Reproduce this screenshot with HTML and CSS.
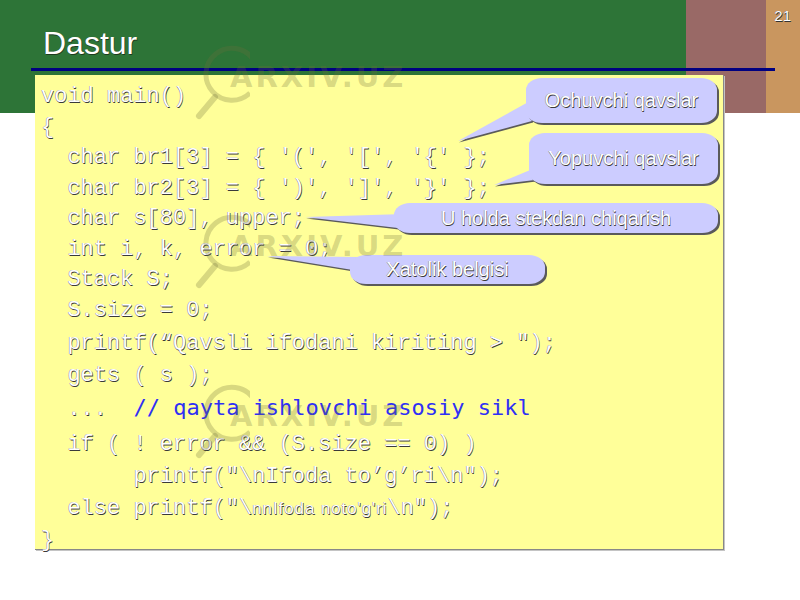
FILE: index.html
```html
<!DOCTYPE html>
<html lang="uz">
<head>
  <meta charset="UTF-8">
  <title>Dastur</title>
  <link rel="stylesheet" href="styles.css">
</head>
<body>
<div class="slide">

  <div class="top">
    <h1 class="title">Dastur</h1>
    <div class="num">21</div>
  </div>
  <div class="rule"></div>

  <!-- kod bloki -->
  <div class="code">
    <div class="ln">void main()</div>
    <div class="ln">{</div>
    <div class="ln">  char br1[3] = { '(', '[', '{' };</div>
    <div class="ln">  char br2[3] = { ')', ']', '}' };</div>
    <div class="ln">  char s[80], upper;</div>
    <div class="ln">  int i, k, error = 0;</div>
    <div class="ln">  Stack S;</div>
    <div class="ln">  S.size = 0;</div>
    <div class="ln g2 first">  printf(“Qavsli ifodani kiriting &gt; ");</div>
    <div class="ln g2">  gets ( s );</div>
    <div class="ln g2">  ...  <span class="cm">// qayta ishlovchi asosiy sikl</span></div>
    <div class="ln g2 cond">  if ( ! error &amp;&amp; (S.size == 0) )</div>
    <div class="ln g2">       printf("\nIfoda to’g’ri\n");</div>
    <div class="ln g2">  else printf("\<span class="sm">nnIfoda noto'g'ri</span>\n");</div>
    <div class="ln g2">}</div>
  </div>

  <!-- izoh pufakchalari -->
  <svg class="tails" width="800" height="600" viewBox="0 0 800 600">
    <g fill="#5a5a5a" transform="translate(1 1.5)">
      <polygon points="532,100 458,141 532,121"/>
      <polygon points="535,168 494,185 535,180"/>
      <polygon points="405,214 305,217 440,233"/>
      <polygon points="360,257 267,256 365,272"/>
    </g>
    <g fill="#ccccff">
      <polygon points="532,100 458,141 532,121"/>
      <polygon points="535,168 494,185 535,180"/>
      <polygon points="405,214 305,217 440,233"/>
      <polygon points="360,257 267,256 365,272"/>
    </g>
  </svg>
  <div class="callout c1">Ochuvchi qavslar</div>
  <div class="callout c2">Yopuvchi qavslar</div>
  <div class="callout c3">U holda stekdan chiqarish</div>
  <div class="callout c4">Xatolik belgisi</div>

  <!-- suv belgisi -->
  <div class="wm w1">
    <svg width="60" height="80" viewBox="0 0 60 80"><path d="M63 14 A26 26 0 1 0 60 48" fill="none" stroke="currentColor" stroke-width="5"/><line x1="25" y1="52" x2="9" y2="71" stroke="currentColor" stroke-width="6" stroke-linecap="round"/></svg>
    <span>ARXIV.UZ</span>
  </div>
  <div class="wm w2">
    <svg width="60" height="80" viewBox="0 0 60 80"><path d="M63 14 A26 26 0 1 0 60 48" fill="none" stroke="currentColor" stroke-width="5"/><line x1="25" y1="52" x2="9" y2="71" stroke="currentColor" stroke-width="6" stroke-linecap="round"/></svg>
    <span>ARXIV.UZ</span>
  </div>
  <div class="wm w3">
    <svg width="60" height="80" viewBox="0 0 60 80"><path d="M63 14 A26 26 0 1 0 60 48" fill="none" stroke="currentColor" stroke-width="5"/><line x1="25" y1="52" x2="9" y2="71" stroke="currentColor" stroke-width="6" stroke-linecap="round"/></svg>
    <span>ARXIV.UZ</span>
  </div>

</div>
</body>
</html>
```

FILE: styles.css
```css
body {
  margin: 0;
  background: #fff;
  font-family: "Liberation Sans", Arial, sans-serif;
}

.slide {
  position: relative;
  width: 800px;
  height: 600px;
  overflow: hidden;
  background: linear-gradient(to right, #2d7437 0 686px, #996966 686px 766px, #c9965f 766px) no-repeat 0 0 / 100% 113px;
}

.top {
  display: flex;
  justify-content: space-between;
  height: 68px;
}

.title {
  margin: 0;
  padding: 27px 0 0 43px;
  font-size: 32px;
  line-height: 32px;
  font-weight: normal;
  color: #fff;
  text-shadow: 0.6px 0.6px 0 #1d3b1f, -0.4px -0.4px 0 #335533;
}

.num {
  padding: 8px 9px 0 0;
  font-size: 15px;
  line-height: 15px;
  color: #fff;
  text-shadow: 0.6px 0.6px 0 #333, -0.4px -0.4px 0 #555;
}

.rule {
  margin-left: 31px;
  width: 744px;
  height: 3px;
  background: #000080;
}

.code {
  box-sizing: border-box;
  margin: 4px 0 0 35px;
  width: 689px;
  height: 475px;
  padding: 7px 0 0 6px;
  background: #ffff99;
  border-right: 1px solid #888;
  border-bottom: 1px solid #888;
  box-shadow: 1px 1px 0 #c4c4c4;
  font-family: "Liberation Mono", "Courier New", monospace;
  font-size: 22px;
  line-height: 30.5px;
  color: #fff;
  text-shadow: 0.6px 0.6px 0 #3a3a3a, -0.5px -0.5px 0 #8a8a8a;
}

.ln {
  white-space: pre;
}

.ln.g2 { line-height: 32px; }
.ln.first { margin-top: 2px; }
.ln.cond { margin-top: 3px; }

.cm {
  font-family: "DejaVu Sans Mono", monospace;
  color: #2f2ff5;
  text-shadow: none;
}

.sm {
  font-family: "Liberation Sans", Arial, sans-serif;
  font-size: 17px;
  letter-spacing: 0.9px;
}

.tails {
  position: absolute;
  left: 0;
  top: 0;
  pointer-events: none;
}

.callout {
  position: absolute;
  display: flex;
  align-items: center;
  justify-content: center;
  background: #ccccff;
  border-radius: 16px / 12px;
  box-shadow: 2px 2px 0 #5a5a5a;
  font-size: 20px;
  color: #fff;
  text-shadow: 0.6px 0.6px 0 #3a3a3a, -0.5px -0.5px 0 #8a8a8a;
  white-space: nowrap;
}

.c1 { left: 526px; top: 78px; width: 191px; height: 45px; }
.c2 { left: 529px; top: 133px; width: 189px; height: 51px; }
.c3 { left: 394px; top: 203px; width: 324px; height: 30px; }
.c4 { left: 350px; top: 255px; width: 195px; height: 29px; }

.wm {
  position: absolute;
  left: 190px;
  width: 230px;
  height: 80px;
  color: rgba(110, 110, 60, 0.27);
  pointer-events: none;
}

.wm svg {
  display: block;
}

.wm span {
  position: absolute;
  left: 40px;
  top: 18px;
  font-family: "DejaVu Sans", sans-serif;
  font-weight: bold;
  font-size: 29px;
  line-height: 29px;
  letter-spacing: 3px;
}

.w1 { top: 45px; }
.w2 { top: 214px; }
.w3 { top: 384px; }
```
